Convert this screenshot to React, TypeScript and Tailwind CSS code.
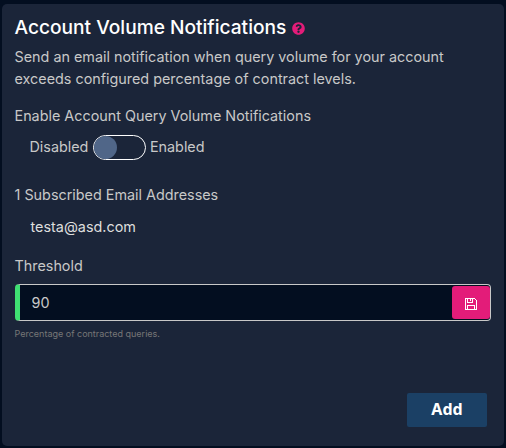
import { useState } from 'react'
import { FaQuestionCircle } from 'react-icons/fa'

function SaveIcon() {
  return (
    <svg width="12" height="12" viewBox="0 0 12 12" fill="none" stroke="currentColor" shapeRendering="crispEdges">
      <path d="M0.5 0.5H9.5L11.5 2.5V11.5H0.5Z" strokeWidth="1.3" />
      <path d="M2.5 0.5V4.5H7.5V0.5" />
      <path d="M5.5 1V3" />
      <path d="M2.5 11.5V7.5H9.5V11.5" />
    </svg>
  )
}

export default function App() {
  const [enabled, setEnabled] = useState(false)
  const [threshold, setThreshold] = useState('90')

  return (
    <div className="h-screen bg-[#030e20] px-0.5 pt-1 pb-0.5 font-['Inter',sans-serif] text-[#c8c8c8]">
      <div className="flex h-full flex-col rounded-[5px] bg-[#1b2539] pr-[13px] pl-[12.5px]">
        <h2 className="mt-[11px] flex h-6 items-center text-[19.15px] leading-6 font-medium text-white">
          Account Volume Notifications
          <FaQuestionCircle className="mt-[3px] ml-[5.5px] size-[13px] text-[#e31c79]" />
        </h2>
        <p className="mt-[7px] w-[450px] text-[14.36px] leading-[22px]">
          Send an email notification when query volume for your account exceeds configured percentage of contract levels.
        </p>

        <p className="mt-[15px] text-[14.36px] leading-[22px]">Enable Account Query Volume Notifications</p>
        <div className="mt-2 flex h-[25px] items-center pl-[15px] text-[14.36px]">
          <span className="-mt-0.5">Disabled</span>
          <button
            type="button"
            role="switch"
            aria-checked={enabled}
            onClick={() => setEnabled(!enabled)}
            className="mr-1 ml-[4.5px] flex h-[25px] w-[53px] items-center rounded-full border border-white"
          >
            <span className={enabled ? 'ml-auto size-[23px] rounded-full bg-[#506688]' : 'size-[23px] rounded-full bg-[#506688]'} />
          </button>
          <span className="-mt-0.5">Enabled</span>
        </div>

        <p className="mt-6 text-[14.36px] leading-[22px]">1 Subscribed Email Addresses</p>
        <p className="mt-2.5 pl-4 text-[14.4px] leading-[22px] text-[#dedede]">testa@asd.com</p>

        <label htmlFor="threshold" className="mt-[17px] text-[14.36px] leading-[22px]">Threshold</label>
        <div className="mt-[7px] ml-[0.5px] flex h-[37px] shrink-0 items-center rounded-[4px] border border-l-[5px] border-[#c8c8c8] border-l-[#3fe072] bg-[#030e20]">
          <input
            id="threshold"
            value={threshold}
            onChange={e => setThreshold(e.target.value)}
            className="min-w-0 flex-1 bg-transparent pl-[11.5px] text-[14.36px] outline-none"
          />
          <button
            type="button"
            aria-label="Save"
            className="flex h-[33px] w-[38px] items-center justify-center rounded-[3px] bg-[#e31c79] pt-[3px] text-white"
          >
            <SaveIcon />
          </button>
        </div>
        <p className="mt-[6px] text-[9px] leading-[14px] text-[#777]">Percentage of contracted queries.</p>

        <button
          type="button"
          className="mt-auto mr-1 mb-[19px] h-[34px] w-20 self-end rounded-[2px] bg-[#1b4065] pb-0.5 font-['Noto_Sans',sans-serif] text-base font-bold text-white"
        >
          Add
        </button>
      </div>
    </div>
  )
}
